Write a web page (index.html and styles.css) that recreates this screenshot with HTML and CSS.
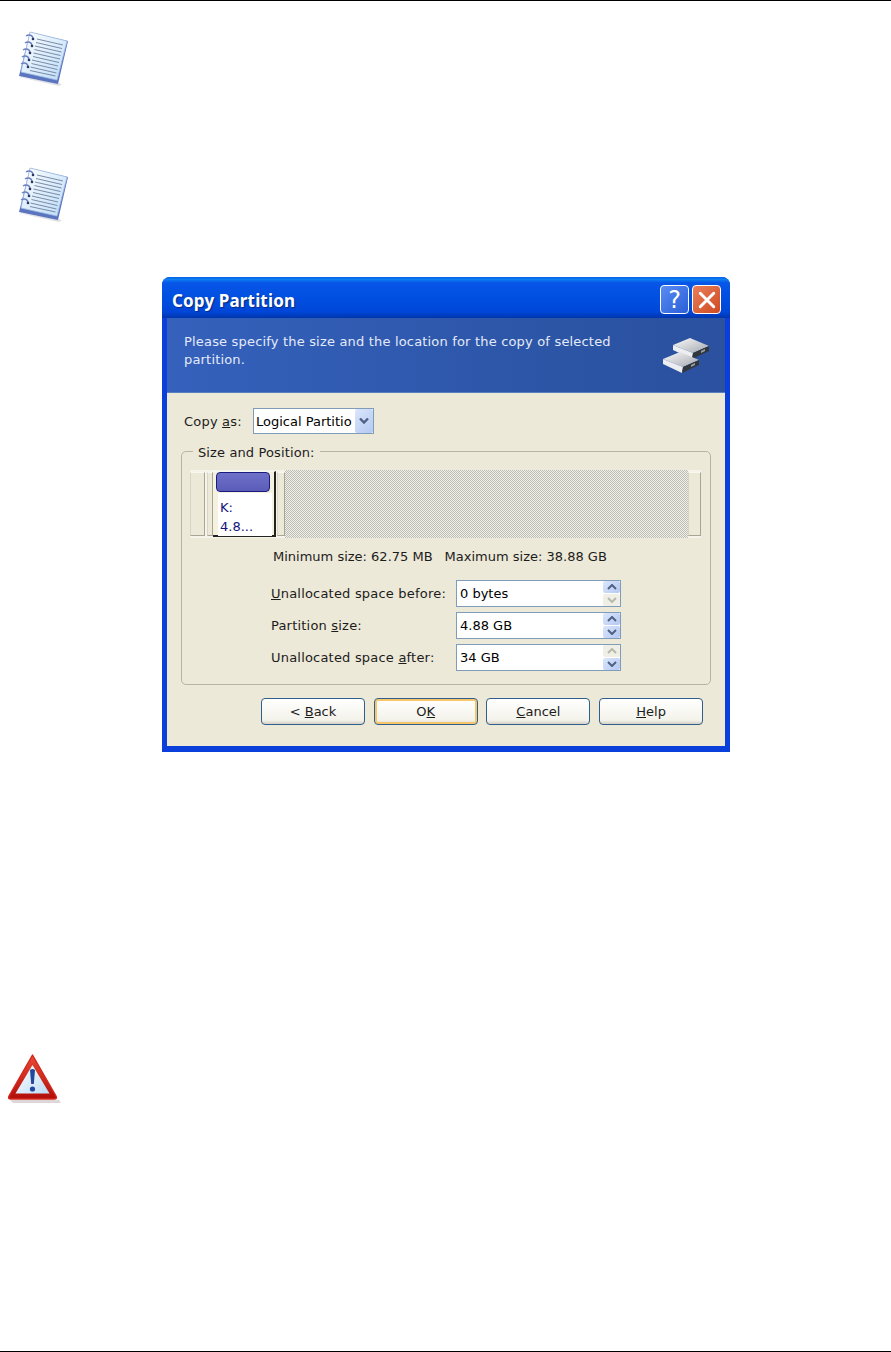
FILE: index.html
```html
<!DOCTYPE html>
<html lang="en">
<head>
<meta charset="utf-8">
<title>Copy Partition</title>
<link rel="stylesheet" href="styles.css">
</head>
<body>
<main class="page">
  <section class="note note-first">
    <svg class="note-icon" viewBox="0 0 60 64" width="60" height="64"><use href="#notepad"/></svg>
  </section>
  <section class="note note-second">
    <svg class="note-icon" viewBox="0 0 60 64" width="60" height="64">
      <defs>
        <linearGradient id="paper" x1="0" y1="0" x2="1" y2="1">
          <stop offset="0" stop-color="#ffffff"/>
          <stop offset="1" stop-color="#b9dcf7"/>
        </linearGradient>
        <g id="notepad">
          <polygon points="6,49 4,49 44,58 47,56" fill="#c9c9d2" opacity=".6"/>
          <polygon points="15,4 53,13 43,56 4,48" fill="#5a74bf"/>
          <polygon points="15,4 52,13 42,52 6,44" fill="url(#paper)" stroke="#a4bbe2" stroke-width=".8"/>
          <g stroke="#7c8aa8" stroke-width="1">
            <line x1="22" y1="11" x2="48" y2="17"/>
            <line x1="21" y1="14.500" x2="47" y2="20.500"/>
            <line x1="20" y1="18" x2="46.500" y2="24"/>
            <line x1="19.500" y1="21.500" x2="45.500" y2="27.500"/>
            <line x1="18.500" y1="25" x2="45" y2="31"/>
            <line x1="18" y1="28.500" x2="44" y2="34.500"/>
            <line x1="17" y1="32" x2="43" y2="38"/>
            <line x1="16.500" y1="35.500" x2="42.500" y2="41.500"/>
            <line x1="15.500" y1="39" x2="41.500" y2="45"/>
            <line x1="15" y1="42.500" x2="40.500" y2="48"/>
          </g>
          <g fill="none" stroke="#6b80c2" stroke-width="1.500">
            <path d="M11 8c3-2 7-1 7 3"/>
            <path d="M10 15c3-2 7-1 7 3"/>
            <path d="M8 22c3-2 7-1 7 3"/>
            <path d="M7 29c3-2 7-1 7 3"/>
            <path d="M6 36c3-2 7-1 7 3"/>
          </g>
          <g fill="#2b3566">
            <circle cx="18" cy="11" r="1.300"/>
            <circle cx="17" cy="18" r="1.300"/>
            <circle cx="15" cy="25" r="1.300"/>
            <circle cx="14" cy="32" r="1.300"/>
            <circle cx="13" cy="39" r="1.300"/>
          </g>
        </g>
      </defs>
      <use href="#notepad"/>
    </svg>
  </section>

  <section class="dialog">
    <header class="titlebar">
      <h1 class="title">Copy Partition</h1>
      <div class="caption-buttons">
        <span class="cap cap-help">?</span>
        <span class="cap cap-close">
          <svg viewBox="0 0 16 16" width="18" height="18"><path d="M2 2 L14 14 M14 2 L2 14" stroke="#fff" stroke-width="2.600" stroke-linecap="round"/></svg>
        </span>
      </div>
    </header>
    <div class="banner">
      <p class="banner-text">Please specify the size and the location for the copy of selected partition.</p>
      <svg class="disks" viewBox="0 0 48 38" width="48" height="38">
        <defs>
          <linearGradient id="disktop" x1="0" y1="0" x2="1" y2="1">
            <stop offset="0" stop-color="#fbfbfb"/>
            <stop offset="1" stop-color="#a2a6ae"/>
          </linearGradient>
          <g id="disk">
            <polygon points="0,7 17,0 36,8 20,15" fill="url(#disktop)"/>
            <polygon points="0,7 20,15 19,21 0,12" fill="#eceef1"/>
            <polygon points="20,15 36,8 36,13 19,21" fill="#32373d"/>
            <polygon points="28,13 32,11 32,13 28,15" fill="#9aa0a8"/>
          </g>
        </defs>
        <use href="#disk" x="10" y="1"/>
        <use href="#disk" x="0" y="15"/>
      </svg>
    </div>
    <div class="body">
      <div class="copy-as">
        <span class="label copy-label">Copy <u>a</u>s:</span>
        <div class="select">
          <span class="select-value">Logical Partitio</span>
          <span class="select-arrow">
            <svg viewBox="0 0 12 10" width="12" height="10"><path d="M2 2.500 L6 6.500 L10 2.500" fill="none" stroke="#4d6185" stroke-width="2.400"/></svg>
          </span>
        </div>
      </div>
      <fieldset class="group">
        <legend class="legend">Size and Position:</legend>
        <div class="bar">
          <span class="slot slot-left"></span>
          <span class="slot slot-handle"></span>
          <div class="partition">
            <span class="pill"></span>
            <span class="part-label">K:<br>4.8...</span>
          </div>
          <span class="slot slot-handle slot-handle-right"></span>
          <span class="free"></span>
          <span class="slot slot-right"></span>
        </div>
        <p class="limits"><span>Minimum size: 62.75 MB</span><span>Maximum size: 38.88 GB</span></p>
        <div class="fields">
          <span class="label"><u>U</u>nallocated space before:</span>
          <div class="spin"><span>0 bytes</span>
            <span class="spin-btns">
              <span class="spin-btn"><svg viewBox="0 0 10 6" width="10" height="6"><path d="M1 5 L5 1 L9 5" fill="none" stroke="#4d6185" stroke-width="2"/></svg></span>
              <span class="spin-btn spin-off"><svg viewBox="0 0 10 6" width="10" height="6"><path d="M1 1 L5 5 L9 1" fill="none" stroke="#b8b8ac" stroke-width="2"/></svg></span>
            </span>
          </div>
          <span class="label">Partition <u>s</u>ize:</span>
          <div class="spin"><span>4.88 GB</span>
            <span class="spin-btns">
              <span class="spin-btn"><svg viewBox="0 0 10 6" width="10" height="6"><path d="M1 5 L5 1 L9 5" fill="none" stroke="#4d6185" stroke-width="2"/></svg></span>
              <span class="spin-btn"><svg viewBox="0 0 10 6" width="10" height="6"><path d="M1 1 L5 5 L9 1" fill="none" stroke="#4d6185" stroke-width="2"/></svg></span>
            </span>
          </div>
          <span class="label">Unallocated space <u>a</u>fter:</span>
          <div class="spin"><span>34 GB</span>
            <span class="spin-btns">
              <span class="spin-btn spin-off"><svg viewBox="0 0 10 6" width="10" height="6"><path d="M1 5 L5 1 L9 5" fill="none" stroke="#b8b8ac" stroke-width="2"/></svg></span>
              <span class="spin-btn"><svg viewBox="0 0 10 6" width="10" height="6"><path d="M1 1 L5 5 L9 1" fill="none" stroke="#4d6185" stroke-width="2"/></svg></span>
            </span>
          </div>
        </div>
      </fieldset>
      <div class="actions">
        <button class="btn" type="button">&lt; <u>B</u>ack</button>
        <button class="btn btn-default" type="button">O<u>K</u></button>
        <button class="btn" type="button"><u>C</u>ancel</button>
        <button class="btn" type="button"><u>H</u>elp</button>
      </div>
    </div>
  </section>

  <section class="warning">
    <svg class="warning-icon" viewBox="0 0 60 54" width="60" height="54">
      <defs>
        <linearGradient id="warnfill" x1="0" y1="0" x2="1" y2="1">
          <stop offset="0" stop-color="#ffffff"/>
          <stop offset="1" stop-color="#bcdcf5"/>
        </linearGradient>
        <linearGradient id="warnred" x1="0" y1="0" x2="0" y2="1">
          <stop offset="0" stop-color="#ea4a34"/>
          <stop offset="1" stop-color="#b20e0a"/>
        </linearGradient>
      </defs>
      <path d="M3 47 L52 47 L54 50 L6 50 Z" fill="#c8bcbc" opacity=".6"/>
      <path d="M25.500 2 L2 43 Q0.500 46 4 46 L47 46 Q50.500 46 49 43 Z" fill="url(#warnred)" stroke="#d2281e" stroke-width="1.400" stroke-linejoin="round"/>
      <path d="M25.500 12 L8.500 40.500 L42.500 40.500 Z" fill="url(#warnfill)"/>
      <path d="M23 17 Q25.500 15 28 17 L26.800 31 L24.200 31 Z" fill="#23479c"/>
      <circle cx="25.500" cy="36" r="2.600" fill="#23479c"/>
    </svg>
  </section>
</main>
</body>
</html>
```
FILE: styles.css
```css
* { box-sizing: border-box; }

html, body { margin: 0; padding: 0; background: #fff; }

body {
  font-family: "DejaVu Sans", "Liberation Sans", sans-serif;
  font-size: 13px;
  color: #1c1c1c;
}

.page {
  height: 1352px;
  border-top: 1px solid #000;
  border-bottom: 1px solid #000;
  display: flex;
  flex-direction: column;
  overflow: hidden;
}

.note { padding-left: 15px; height: 64px; }
.note-first { margin-top: 27px; }
.note-second { margin-top: 72px; }
.note-icon { display: block; filter: blur(.4px); }

.dialog {
  width: 568px;
  height: 475px;
  margin: 49px 0 0 162px;
  border-radius: 8px 8px 0 0;
  background: #0a3fdc;
  padding: 0 5px 6px;
  display: flex;
  flex-direction: column;
}

.titlebar {
  height: 41px;
  margin: 0 -5px;
  padding: 0 9px 0 10px;
  border-radius: 8px 8px 0 0;
  background: linear-gradient(#0a5fe6 0, #0b7ff2 6%, #0856e8 14%, #004ee0 55%, #0046d8 85%, #0036ac 100%);
  display: flex;
  align-items: center;
  justify-content: space-between;
}

.title {
  margin: 6px 0 0;
  font-family: "Noto Sans", sans-serif;
  font-size: 17px;
  letter-spacing: .15px;
  font-weight: 700;
  color: #fff;
  text-shadow: 1px 1px 1px #0a2a80;
}

.caption-buttons { display: flex; gap: 3px; margin-top: 4px; }

.cap {
  width: 29px;
  height: 29px;
  border: 1px solid #fff;
  border-radius: 4px;
  display: flex;
  align-items: center;
  justify-content: center;
  color: #fff;
}

.cap-help {
  background: linear-gradient(135deg, #5a8cf2, #2a5fd8);
  font-size: 24px;
  line-height: 1;
}

.cap-close { background: linear-gradient(135deg, #e8805c, #d04a20); }

.banner {
  height: 75px;
  background: linear-gradient(90deg, #3561bc, #2c55a6 70%, #2b519f);
  border-bottom: 1px solid #5a7fc0;
  padding: 15px 14px 0 17px;
  display: flex;
  justify-content: space-between;
  align-items: flex-start;
}

.banner-text {
  margin: 0;
  width: 440px;
  color: #e4eaf8;
  line-height: 18px;
  letter-spacing: .18px;
}

.disks { margin-top: 4px; filter: blur(.3px); }

.body {
  flex: 1;
  background: #ece9d8;
  padding: 15px 14px 0 14px;
  display: flex;
  flex-direction: column;
}

.copy-as {
  display: flex;
  align-items: center;
  padding-left: 3px;
}

.label { letter-spacing: .2px; }

.copy-label { width: 69px; flex: none; }

.select {
  width: 121px;
  height: 26px;
  background: #fff;
  border: 1px solid #7f9db9;
  padding-left: 2px;
  display: flex;
  align-items: center;
  justify-content: space-between;
  overflow: hidden;
  color: #000;
}

.select-value { white-space: nowrap; }

.select-arrow {
  width: 18px;
  height: 24px;
  flex: none;
  background: linear-gradient(135deg, #dbe6fb, #b4c8f2);
  border-radius: 2px;
  display: flex;
  align-items: center;
  justify-content: center;
}

.group {
  margin: 7px 0 0;
  padding: 9px 9px 0 8px;
  height: 244px;
  border: 1px solid #b7b49f;
  border-radius: 5px;
  min-width: 0;
}

.legend { padding: 3px 5px 0; margin-left: 3px; line-height: 17px; letter-spacing: .12px; }

.bar {
  height: 68px;
  display: flex;
  align-items: stretch;
  background: #f6f4ea;
}

.slot {
  border: 1px solid #cfccba;
  border-color: #f8f8f2 #a8a596 #a8a596 #d8d5c4;
  background: #ece9d8;
  margin: 2px 0;
}

.slot-left { width: 15px; margin-right: 2px; }
.slot-handle { width: 6px; }
.slot-handle-right { width: 8px; margin-left: 1px; }
.slot-right { width: 13px; }

.partition {
  width: 63px;
  border-right: 2px solid #222;
  border-bottom: 2px solid #222;
  background: #f4f1de;
  border-top: 1px solid #f8f8f2;
  display: flex;
  flex-direction: column;
  padding: 0 2px 0 3px;
  margin: 1px 0;
}

.pill {
  height: 20px;
  background: linear-gradient(#6f70c8, #5a5cb8);
  border: 1px solid #1a1a80;
  border-radius: 4px;
  margin-right: 2px;
  flex: none;
}

.part-label {
  margin: 1px 0 0 2px;
  padding: 5px 0 0 2px;
  flex: 1;
  background: #fff;
  color: #14147c;
  line-height: 19px;
  white-space: nowrap;
}

.free {
  flex: 1;
  background-color: #dddbd2;
  background-image: repeating-conic-gradient(#bdbcb6 0 25%, #f0efe8 0 50%);
  background-size: 2px 2px;
}

.limits {
  margin: 9px 0 0 83px;
  display: flex;
  gap: 12px;
  line-height: 20px;
}

.fields {
  margin: 13px 0 0 81px;
  display: grid;
  grid-template-columns: 185px 165px;
  row-gap: 5px;
  align-items: center;
}

.spin {
  height: 27px;
  background: #fff;
  border: 1px solid #7f9db9;
  padding-left: 3px;
  display: flex;
  align-items: center;
  justify-content: space-between;
  color: #000;
}

.spin-btns {
  width: 17px;
  height: 25px;
  display: flex;
  flex-direction: column;
  gap: 1px;
}

.spin-btn {
  flex: 1;
  background: linear-gradient(135deg, #dbe6fb, #b4c8f2);
  border-radius: 2px;
  display: flex;
  align-items: center;
  justify-content: center;
}

.spin-off { background: #f0efe6; }

.actions {
  margin: 13px 0 0 80px;
  display: flex;
  gap: 8.700px;
}

.btn {
  width: 104px;
  height: 27px;
  padding: 0;
  font: inherit;
  color: #1c1c1c;
  border: 1px solid #2f5f8a;
  border-radius: 4px;
  background: linear-gradient(#ffffff, #f3f2ea 85%, #d6d0c5);
}

.btn-default {
  box-shadow: inset 0 0 0 2px #f7c66a;
  border-color: #2f5f8a;
}

.warning { margin-top: 301px; padding-left: 7px; }
.warning-icon { display: block; filter: blur(.3px); }
```
